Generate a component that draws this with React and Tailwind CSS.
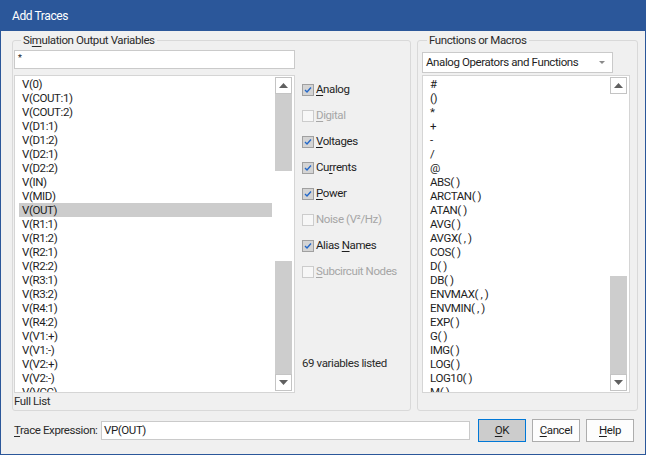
import React from 'react';

// Add Traces dialog
const leftItems = [
  'V(0)', 'V(COUT:1)', 'V(COUT:2)', 'V(D1:1)', 'V(D1:2)', 'V(D2:1)', 'V(D2:2)', 'V(IN)', 'V(MID)', 'V(OUT)',
  'V(R1:1)', 'V(R1:2)', 'V(R2:1)', 'V(R2:2)', 'V(R3:1)', 'V(R3:2)', 'V(R4:1)', 'V(R4:2)',
  'V(V1:+)', 'V(V1:-)', 'V(V2:+)', 'V(V2:-)', 'V(VCC)',
];

const rightItems = [
  '#', '()', '*', '+', '-', '/', '@', 'ABS( )', 'ARCTAN( )', 'ATAN( )', 'AVG( )', 'AVGX( , )', 'COS( )', 'D( )', 'DB( )',
  'ENVMAX( , )', 'ENVMIN( , )', 'EXP( )', 'G( )', 'IMG( )', 'LOG( )', 'LOG10( )', 'M( )',
];

const Arrow = ({ up }) => (
  <div className="h-[17px] w-full border border-[#c4c4c4] bg-white flex items-center justify-center shrink-0">
    <svg width="9" height="5" viewBox="0 0 9 5">
      {up ? <polygon points="0,5 9,5 4.5,0" fill="#606060" /> : <polygon points="0,0 9,0 4.5,5" fill="#606060" />}
    </svg>
  </div>
);

const ScrollBar = ({ children }) => (
  <div className="w-[17px] my-[1px] mr-[2px] flex flex-col shrink-0">{children}</div>
);

const Check = ({ k, rest = '', pre = '', checked, disabled }) => (
  <div className="h-[26px] flex items-center">
    <div
      className={
        checked
          ? 'w-[12px] h-[12px] border border-[#a0a0a0] bg-[#d4d4d4] flex items-center justify-center'
          : 'w-[12px] h-[12px] border border-[#cccccc] bg-[#f7f7f7]'
      }
    >
      {checked && (
        <svg width="10" height="10" viewBox="0 0 10 10">
          <polyline points="2,5 4,7 8,2.5" fill="none" stroke="#2468c8" strokeWidth="1.4" />
        </svg>
      )}
    </div>
    <span className={disabled ? 'ml-[2px] text-[#a6a6a6]' : 'ml-[2px] text-[#1e1e1e]'}>
      {pre}
      <u className="underline underline-offset-2">{k}</u>
      {rest}
    </span>
  </div>
);

export default function App() {
  return (
    <div className="w-[646px] h-[455px] bg-[#2b579a] flex flex-col font-[family-name:Roboto,'Liberation_Sans',sans-serif] text-[11.5px] tracking-[-0.4px] text-[#1e1e1e]">
      <div className="h-[31px] shrink-0 flex items-center pl-[12px] pt-[1px] text-white text-[12px]">Add Traces</div>

      <div className="flex-1 mx-[1px] mb-[1px] bg-[#f0f0f0] flex flex-col">
        <div className="flex mt-[1px]">
          {/* left group */}
          <fieldset className="ml-[11px] w-[399px] h-[379px] border border-[#d9d9d9] rounded-[3px] pl-[1px]">
            <legend className="ml-[7px] px-[2px] leading-[16px] text-[#2b2b2b]">
              Si<u className="underline underline-offset-2">m</u>ulation Output Variables
            </legend>
            <div className="flex">
              <div className="w-[281px] flex flex-col">
                <div className="mt-[2px] h-[19px] border border-[#cacaca] bg-white pl-[3px] text-[9px] leading-[14px]">*</div>
                <div className="mt-[6px] h-[318px] border border-[#d5d5d5] bg-white flex">
                  <div className="flex-1 pt-[1px] pl-[4px] pr-[3px] overflow-hidden">
                    {leftItems.map((it) => (
                      <div key={it} className={it === 'V(OUT)' ? 'h-[14px] leading-[14px] pl-[3px] bg-[#cccccc]' : 'h-[14px] leading-[14px] pl-[3px]'}>
                        {it}
                      </div>
                    ))}
                  </div>
                  <ScrollBar>
                    <Arrow up />
                    <div className="h-[77px] bg-[#cdcdcd]" />
                    <div className="h-[90px] bg-white" />
                    <div className="flex-1 bg-[#cdcdcd]" />
                    <Arrow />
                  </ScrollBar>
                </div>
                <div className="leading-[16px] text-[#2b2b2b]">Full List</div>
              </div>

              <div className="ml-[7px] flex flex-col pt-[29px]">
                <Check k="A" rest="nalog" checked />
                <Check k="D" rest="igital" disabled />
                <Check k="V" rest="oltages" checked />
                <Check pre="Cu" k="r" rest="rents" checked />
                <Check k="P" rest="ower" checked />
                <Check k="" rest="Noise (V²/Hz)" disabled />
                <Check pre="Alias " k="N" rest="ames" checked />
                <Check k="S" rest="ubcircuit Nodes" disabled />
                <div className="mt-[70px] leading-[16px] text-[#2b2b2b]">69 variables listed</div>
              </div>
            </div>
          </fieldset>

          {/* right group */}
          <fieldset className="ml-[6px] w-[221px] h-[379px] border border-[#d9d9d9] rounded-[3px] pl-[4px]">
            <legend className="ml-[5px] px-[2px] leading-[16px] text-[#2b2b2b]">Functions or Macros</legend>
            <div className="mt-[4px] w-[191px] h-[21px] border border-[#cacaca] bg-white flex items-center pl-[3px]">
              <span className="flex-1">Analog Operators and Functions</span>
              <svg className="mr-[7px]" width="6" height="3" viewBox="0 0 6 3">
                <polygon points="0,0 6,0 3,3" fill="#8a8a8a" />
              </svg>
            </div>
            <div className="mt-[2px] w-[208px] h-[318px] border border-[#d5d5d5] bg-white flex">
              <div className="flex-1 pt-[1px] pl-[4px] pr-[3px] overflow-hidden">
                {rightItems.map((it) => (
                  <div key={it} className="h-[14px] leading-[14px] pl-[3px] whitespace-pre">
                    {it}
                  </div>
                ))}
              </div>
              <ScrollBar>
                <Arrow up />
                <div className="h-[182px] bg-white" />
                <div className="flex-1 bg-[#cdcdcd]" />
                <Arrow />
              </ScrollBar>
            </div>
          </fieldset>
        </div>

        {/* bottom row */}
        <div className="mt-[8px] flex items-center">
          <div className="ml-[13px] w-[87px] whitespace-nowrap text-[#2b2b2b]">
            <u className="underline underline-offset-2">T</u>race Expression:
          </div>
          <div className="w-[369px] h-[19px] border border-[#cacaca] bg-white pl-[2px] leading-[17px]">VP(OUT)</div>
          <button className="ml-[8px] w-[48px] h-[23px] border border-[#0078d7] bg-[#cccccc]">
            <u className="underline underline-offset-2">O</u>K
          </button>
          <button className="ml-[6px] w-[48px] h-[23px] border border-[#adadad] bg-[#fdfdfd]">
            <u className="underline underline-offset-2">C</u>ancel
          </button>
          <button className="ml-[6px] w-[48px] h-[23px] border border-[#adadad] bg-[#fdfdfd]">
            <u className="underline underline-offset-2">H</u>elp
          </button>
        </div>
      </div>
    </div>
  );
}
